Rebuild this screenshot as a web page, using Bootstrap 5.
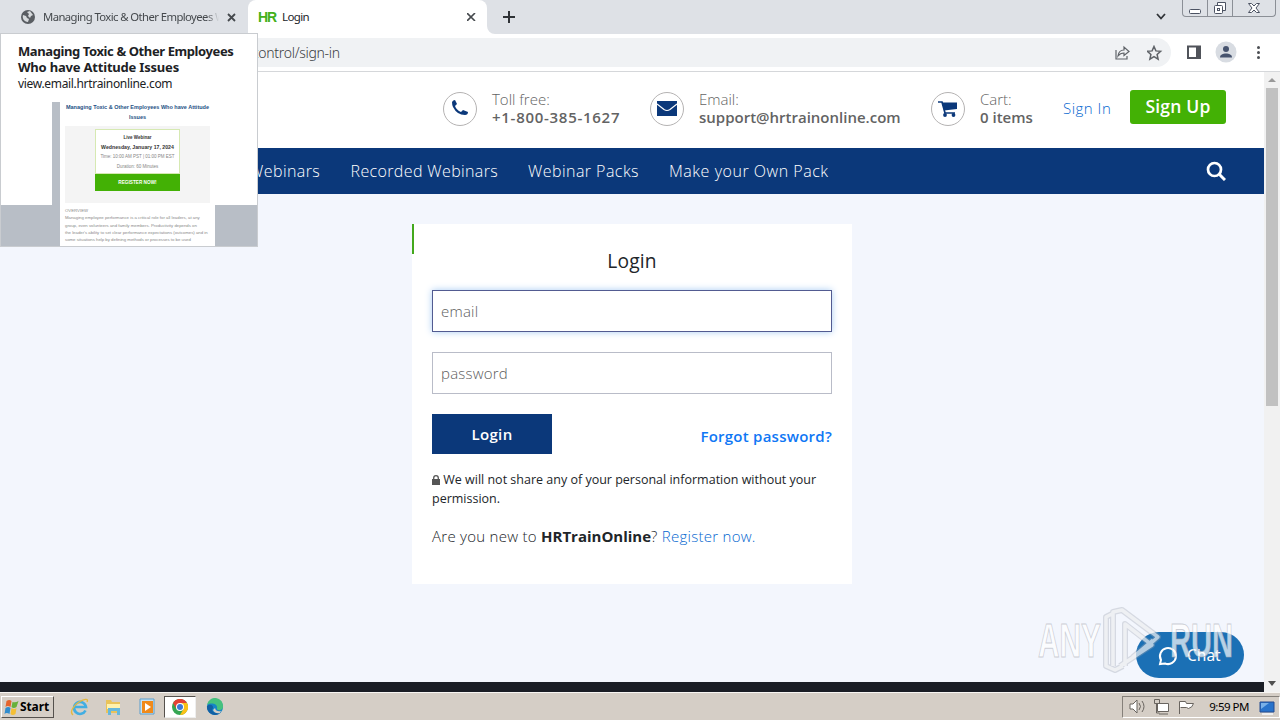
<!DOCTYPE html>
<html lang="en">
<head>
    <meta charset="UTF-8">
    <meta name="viewport" content="width=device-width, initial-scale=1.0">
    <title>Login</title>
    <link href="https://cdn.jsdelivr.net/npm/bootstrap@5.3.0/dist/css/bootstrap.min.css" rel="stylesheet">
    <style>
        body { width: 1280px; height: 720px; overflow: hidden; font-family: "Open Sans", "Noto Sans", sans-serif; font-size: 15px; color: #212529; }
        svg { display: block; flex: none; }
        .ui { font-family: "Noto Sans", sans-serif; }
        /* browser */
        .tabstrip { height: 34px; background: #dee1e6; font-size: 12px; }
        .tab-old { width: 248px; padding-left: 21px; color: #45494d; }
        .tab-old .tab-title { width: 176px; margin-left: 8px; overflow: hidden; font-size: 11.3px; letter-spacing: -.58px; -webkit-mask-image: linear-gradient(to right, #000 93%, transparent 100%); }
        .tab-now { width: 239px; background: #fff; border-radius: 8px 8px 0 0; padding: 0 8px 0 10px; }
        .tab-name { font-size: 11.5px; letter-spacing: -.6px; }
        .hr-logo { font: bold 14px "Liberation Sans", sans-serif; color: #43b01a; width: 24px; letter-spacing: -1.2px; }
        .win-btns { width: 94px; height: 17px; border: 1px solid #8b8f96; border-top: 0; border-radius: 0 0 4px 4px; margin-right: 4px; }
        .win-btns > div { border-right: 1px solid #8b8f96; width: 25px; padding-top: 1px; }
        .win-btns > div:last-child { border: 0; width: 42px; }
        .toolbar { height: 38px; padding-top: 4px; border-bottom: 1px solid #d5d7da; background: #fff; }
        .address { width: 1171px; height: 29px; background: #f0f2f4; border-radius: 0 15px 15px 0; padding-left: 252px; font-size: 14px; font-weight: 300; color: #3c4043; letter-spacing: -.3px; }
        /* page */
        .viewport { height: 620px; }
        .page { width: 1264px; background: #f3f6fd; }
        .topbar { height: 76px; padding-left: 443px; background: #fff; color: #636363; line-height: 18px; padding-bottom: 2px; font-weight: 300; }
        .topbar b { font-weight: 600; display: block; }
        .contact-text { margin-top: -2px; }
        .c-phone b { letter-spacing: .72px; }
        .ring { width: 34px; height: 34px; border: 1px solid #b5b3b3; border-radius: 50%; margin-right: 15px; flex: none; }
        .c-phone { width: 207px; }
        .c-mail { width: 281px; }
        .c-cart { width: 132px; }
        .c-sign { width: 67px; letter-spacing: .5px; margin-top: -2px; }
        .bg-link { color: #0667d0; text-decoration: none; }
        .btn-up { width: 96px; height: 34px; background: #43b105; color: #fff; border-radius: 3px; font-size: 17.5px; font-weight: 600; padding: 0; margin-top: -5px; letter-spacing: .2px; }
        .mainnav { height: 46px; background: #0b387a; padding: 0 38px 0 215px; font-size: 16px; font-weight: 300; color: #fff; }
        .mainnav span { white-space: nowrap; }
        .n1 { width: 135.5px; letter-spacing: .4px; }
        .n2 { width: 177.5px; letter-spacing: .37px; }
        .n3 { width: 141px; letter-spacing: .45px; }
        .n4 { letter-spacing: .53px; }
        .login-box { width: 440px; height: 360px; margin: 30px 0 0 412px; background: #fff; }
        .accent { width: 2px; height: 30px; background: #43a81c; }
        .login-form { width: 400px; margin-left: 18px; padding-top: 25px; }
        .login-form h1 { font-size: 19.2px; line-height: 24px; font-weight: 500; margin-bottom: 17px; letter-spacing: .2px; }
        .login-form .form-control { height: 42px; border-radius: 0; border: 1px solid #b9bcc8; padding: 0 8px 1px; font-size: 15px; font-weight: 300; margin-bottom: 20px; letter-spacing: .2px; }
        .login-form .form-control::placeholder { color: #5c5c5c; opacity: 1; }
        .login-form .is-active { border-color: #525b91; box-shadow: 0 0 7px #a9ccf3; }
        .btn-login { width: 120px; height: 40px; border-radius: 0; background: #0b387a; color: #fff; font-size: 15px; font-weight: 600; padding: 0; letter-spacing: .35px; }
        .forgot { color: #0f77f5; font-weight: 600; text-decoration: none; padding-top: 5px; letter-spacing: .25px; }
        .privacy { font-size: 12.5px; line-height: 19px; margin: 16px 0 17px; }
        .privacy svg { display: inline-block; vertical-align: -1px; }
        .signup { font-weight: 300; line-height: 22px; letter-spacing: .27px; }
        .signup b { font-weight: 700; letter-spacing: 0; }
        .scrollcol { width: 16px; background: #f1f1f1; }
        .thumb { width: 12px; height: 318px; background: #c1c1c1; margin: 5px auto 0; }
        .page-foot { height: 10px; background: #1a1d25; }
        /* hover card of the first tab */
        .hovercard { position: absolute; left: 0; top: 33px; width: 258px; height: 214px; background: #fff; border: 1px solid #c9ccd0; overflow: hidden; font-size: 13px; line-height: 16px; color: #202124; }
        .hover-head { height: 68px; padding: 9px 0 0 17px; white-space: nowrap; }
        .hover-head b { letter-spacing: -.4px; }
        .hover-head b:nth-of-type(2) { letter-spacing: -.2px; }
        .hover-head .site { font-size: 12px; letter-spacing: -.32px; }
        .preview { height: 145px; background: linear-gradient(#fff 103px, #b8bec6 103px); padding-left: 51px; font-family: "Liberation Sans", sans-serif; }
        .mail { width: 163px; height: 145px; background: #fff; border-left: 8px solid #b8bec6; padding: 0 5px; text-align: center; }
        .mail-title { font-size: 5.5px; line-height: 9.5px; font-weight: bold; color: #245084; padding-top: 1px; white-space: nowrap; }
        .mail-body { background: #f4f4f4; height: 77px; margin-top: 4px; padding: 3px 30px 0; }
        .mail-card { border: 1px solid #d6e9b2; background: #fff; height: 45px; font-size: 4.5px; line-height: 9.7px; color: #858585; padding-top: 3px; white-space: nowrap; }
        .mail-card b { color: #333; display: block; }
        .mail-card b + b { font-size: 5.2px; }
        .mail-btn { background: #43b105; color: #fff; height: 17px; line-height: 17px; font-size: 4.7px; font-weight: bold; }
        .mail-text { font-size: 4.3px; line-height: 7.3px; color: #898989; text-align: left; margin-top: 4px; white-space: nowrap; }
        /* chat and watermark lie over the page */
        .chat { position: absolute; left: 1136px; top: 632px; width: 108px; height: 46px; border-radius: 23px; background: #1b70b5; color: #fff; font-size: 15.5px; padding: 2px 0 0 21px; }
        .watermark { position: absolute; left: 1030px; top: 600px; }
        /* taskbar */
        .taskbar { height: 28px; background: #d5cec6; border-top: 1px solid #f7f5f2; padding: 3px 0 0 1px; font-size: 12px; color: #000; }
        .start { width: 53px; height: 22px; border: 1px solid; border-color: #fff #55514d #55514d #fff; font-weight: bold; letter-spacing: -.1px; padding-left: 1px; }
        .apps { margin-left: 16px; height: 22px; }
        .app-on { width: 32px; height: 22px; background: #fff; border: 1px solid; border-color: #55514d #eee #eee #55514d; }
        .tray { width: 158px; height: 22px; border: 1px solid; border-color: #85807a #fff #fff #85807a; padding-left: 6px; }
        .clock { font-size: 11.5px; letter-spacing: -.5px; }
    </style>
</head>
<body class="d-flex flex-column position-relative">
    <div class="tabstrip ui d-flex">
        <div class="tab-old d-flex align-items-center">
            <svg width="14" height="14" viewBox="0 0 14 14"><circle cx="7" cy="7" r="7" fill="#5a5e63"/><path d="M2 5l3 1 1 2 2 1-1 3C3 12 1 8 2 5zM6 2l3-1 3 4-2 1-1 2-2-2 1-2z" fill="#d7dadd"/></svg>
            <div class="tab-title text-nowrap">Managing Toxic &amp; Other Employees W</div>
            <svg width="9" height="9" viewBox="0 0 9 9" class="ms-2"><path d="M1 1l7 7M8 1L1 8" stroke="#45494d" stroke-width="1.8"/></svg>
        </div>
        <div class="tab-now d-flex align-items-center">
            <span class="hr-logo">HR</span><span class="tab-name">Login</span>
            <svg class="ms-auto" width="12" height="8" viewBox="0 0 12 8"><path d="M0 0l8 8M8 0L0 8" stroke="#45494d" stroke-width="1.6"/></svg>
        </div>
        <svg width="45" height="34" viewBox="0 0 45 34"><path d="M0 26v8h8a8 8 0 0 1-8-8z" fill="#fff"/><path d="M22 11v12M16 17h12" stroke="#2f3236" stroke-width="2"/></svg>
        <svg class="ms-auto me-3" width="11" height="34" viewBox="0 0 11 34"><path d="M2 14l4 4.500 4-4.500" fill="none" stroke="#303338" stroke-width="1.800"/></svg>
        <div class="win-btns d-flex justify-content-start">
            <div><svg width="24" height="14"><rect x="6.500" y="8.500" width="11" height="4" rx="1" fill="#fff" stroke="#4c5363"/></svg></div>
            <div><svg width="24" height="15"><path d="M9.500 4.500v-3h8v8h-3" fill="#fff" stroke="#4c5363"/><rect x="6.500" y="4.500" width="8" height="8" rx="1" fill="#fff" stroke="#4c5363"/><rect x="9.500" y="7.500" width="2" height="2" fill="none" stroke="#4c5363"/></svg></div>
            <div><svg width="42" height="15"><path d="M15.500 2.500h3l2.500 2.500 2.500-2.500h3l-3.500 4.500 3.500 4.500h-3l-2.500-2.500-2.500 2.500h-3l3.500-4.500z" fill="#fff" stroke="#4c5363"/></svg></div>
        </div>
    </div>
    <div class="toolbar ui d-flex">
        <div class="address d-flex align-items-center">
            <span>control/sign-in</span>
            <svg class="ms-auto" width="17" height="16" viewBox="0 0 17 16" fill="none" stroke="#5f6368" stroke-width="1.200"><path d="M2 5v9h11v-3M4 11c.5-4 3-6 6-6V2l5 4.500-5 4V8c-3 0-4.500 1-6 3z"/></svg>
            <svg class="ms-3 me-2" width="16" height="16" viewBox="0 0 16 16" fill="none" stroke="#5f6368" stroke-width="1.500"><path d="M7 1.500l1.900 4.400 4.700.4-3.500 3.200 1 4.700L7 11.700l-4.100 2.500 1-4.700L.4 6.300l4.700-.4z"/></svg>
        </div>
        <svg width="109" height="29" viewBox="0 0 109 29">
            <path d="M16 7.500h14v13.500H16zM18 9.500v9.500h7V9.500z" fill="#50535a" fill-rule="evenodd"/>
            <circle cx="55" cy="14" r="10.500" fill="#d8dce2"/><circle cx="55" cy="11" r="3" fill="#46536e"/><path d="M49 19.500c0-3 3-4 6-4s6 1 6 4z" fill="#46536e"/>
            <g fill="#4b4e53"><circle cx="87.500" cy="9.500" r="1.500"/><circle cx="87.500" cy="14.500" r="1.500"/><circle cx="87.500" cy="19.500" r="1.500"/></g>
        </svg>
    </div>
    <div class="viewport d-flex">
        <div class="page d-flex flex-column">
            <header class="topbar d-flex align-items-center">
                <div class="c-phone d-flex align-items-center">
                    <div class="ring d-flex align-items-center justify-content-center"><svg width="18" height="20" viewBox="0 0 18 20"><path d="M1 3q1-2 3-2l2 4-2 2q1.500 4 6 6l2-2 5 2q0 3-3 3Q6 16 2 8 1 6 1 3z" fill="#0b387a"/></svg></div>
                    <div class="contact-text">Toll free:<b>+1-800-385-1627</b></div>
                </div>
                <div class="c-mail d-flex align-items-center">
                    <div class="ring d-flex align-items-center justify-content-center"><svg width="20" height="16" viewBox="0 0 20 16"><path d="M0 0h20v15H0z" fill="#0b387a"/><path d="M0 3l7 5.500q3 2 6 0L20 3" fill="none" stroke="#fff" stroke-width="1.200"/></svg></div>
                    <div class="contact-text">Email:<b>support@hrtrainonline.com</b></div>
                </div>
                <div class="c-cart d-flex align-items-center">
                    <div class="ring d-flex align-items-center justify-content-center"><svg width="20" height="17" viewBox="0 0 20 17"><path d="M0 1h4l3 11h10" fill="none" stroke="#0b387a" stroke-width="1.700"/><path d="M4 1.500h15V8L6 9.500z" fill="#0b387a"/><circle cx="7" cy="14" r="1.900" fill="#0b387a"/><circle cx="15.500" cy="14" r="1.900" fill="#0b387a"/></svg></div>
                    <div class="contact-text">Cart:<b>0 items</b></div>
                </div>
                <a class="c-sign bg-link" href="#">Sign In</a>
                <button class="btn btn-up">Sign Up</button>
            </header>
            <nav class="mainnav d-flex align-items-center">
                <span class="n1">Live Webinars</span>
                <span class="n2">Recorded Webinars</span>
                <span class="n3">Webinar Packs</span>
                <span class="n4">Make your Own Pack</span>
                <svg class="ms-auto" width="20" height="20" viewBox="0 0 20 20" fill="none" stroke="#fff"><circle cx="8.500" cy="8.500" r="6.500" stroke-width="2.700"/><path d="M13 13l6 6" stroke-width="3"/></svg>
            </nav>
            <main class="login-box d-flex">
                <div class="accent"></div>
                <form class="login-form">
                    <h1 class="text-center">Login</h1>
                    <input type="email" class="form-control is-active" placeholder="email">
                    <input type="password" class="form-control" placeholder="password">
                    <div class="d-flex justify-content-between align-items-center">
                        <button type="button" class="btn btn-login">Login</button>
                        <a class="forgot" href="#">Forgot password?</a>
                    </div>
                    <p class="privacy"><svg width="8" height="10" viewBox="0 0 8 10"><path d="M0 4h8v6H0z" fill="#555"/><path d="M1.700 5V3a2.300 2.300 0 0 1 4.600 0v2" fill="none" stroke="#555" stroke-width="1.300"/></svg> <span>We will not share any of your personal information without your</span><br>permission.</p>
                    <div class="signup"><span>Are you new to </span><b>HRTrainOnline</b>? <a class="bg-link" href="#">Register now.</a></div>
                </form>
            </main>
            <div class="page-foot mt-auto"></div>
        </div>
        <div class="scrollcol d-flex flex-column">
            <svg width="16" height="11" viewBox="0 0 16 11"><path d="M4 10l4-4 4 4z" fill="#999"/></svg>
            <div class="thumb"></div>
            <svg class="mt-auto" width="16" height="16" viewBox="0 0 16 16"><path d="M4 5h8l-4 5z" fill="#505050"/></svg>
        </div>
    </div>
    <footer class="taskbar ui d-flex">
        <div class="start d-flex align-items-center">
            <svg width="17" height="17" viewBox="0 0 16 17"><path d="M3 2q3-2 5 0L7 8q-3-2-5 0z" fill="#e5642d"/><path d="M9 3q3 1 6-1l-2 6q-3 2-5 0z" fill="#68b13b"/><path d="M2 9q3-2 5 0l-1 6q-3-2-5 0z" fill="#318ccd"/><path d="M8 9q3 2 5 0l-1 6q-3 2-5 0z" fill="#f4bf35"/></svg><span>Start</span>
        </div>
        <div class="apps d-flex align-items-center">
            <svg width="19" height="20" viewBox="0 0 19 20"><path d="M15.500 13.500A6 6 0 1 1 16 10H5" fill="none" stroke="#42aee2" stroke-width="2.600"/><path d="M3 18C-1 15 4 8 9 5s10-4 8 0" fill="none" stroke="#e5b93f" stroke-width="1.400"/></svg>
            <svg class="ms-3" width="17" height="18" viewBox="0 0 17 18"><path d="M1 2h5l1 2h8v11H1z" fill="#e9c35a"/><path d="M2 6h13v5H2z" fill="#fff2ad"/><path d="M3 10h12v7h-3v-4H6v4H3z" fill="#66b8dc"/></svg>
            <svg class="ms-3" width="18" height="18" viewBox="0 0 18 18"><path d="M2 1h14v15H2z" fill="#c7e2f3" stroke="#5b9fce"/><path d="M4 3h11v12H4z" fill="#f08a1b"/><path d="M7 5l6 4-6 4z" fill="#fff"/></svg>
            <div class="app-on ms-2 d-flex align-items-center justify-content-center"><svg width="16" height="16" viewBox="0 0 16 16"><circle cx="8" cy="8" r="8" fill="#35a653"/><path d="M1 4a8 8 0 0 1 14 0H8L4.500 10z" fill="#e44235"/><path d="M15 4a8 8 0 0 1-7 12l3.500-6L8 4z" fill="#fbc116"/><circle cx="8" cy="8" r="4" fill="#fff"/><circle cx="8" cy="8" r="3" fill="#3c79d8"/></svg></div>
            <svg class="ms-2" width="20" height="18" viewBox="0 0 20 18"><circle cx="11" cy="9" r="8" fill="#1685c6"/><path d="M3 7a8 8 0 0 1 16 2c0 4-7 4-6 1 1-4-6-6-10-3z" fill="#46c17e"/><path d="M3 8c4-3 8 0 5 4 1 3 5 4 9 2-5 6-15 2-14-6z" fill="#1260a4"/><path d="M11 10q1 4 6 3l-1 2q-5 1-7-3z" fill="#d5cec6"/></svg>
        </div>
        <div class="tray d-flex align-items-center ms-auto">
            <svg width="69" height="20" viewBox="0 0 69 20" fill="#fff" stroke="#69645f"><path d="M1 7h3l4-4v13l-4-4H1z"/><path d="M10 6q3 3.500 0 7M13 4q4 5.500 0 11" fill="none"/><path d="M28.500 6.500h11v8h-11zM30 17h9"/><path d="M25.500 2.500h5v4h-5zM27.500 6v10h3" fill="none"/><path d="M50.500 17V4.500h6l1 2h7q-1 4-5 5l-2-1h-6"/></svg>
            <span class="clock ms-auto">9:59 PM</span>
            <svg class="ms-2 me-0" width="22" height="18" viewBox="0 0 22 18"><path d="M3 4h14v10H3z" fill="#2873cb" stroke="#244c91"/><path d="M4 5h8l-8 6z" fill="#78b0e8"/><path d="M5 16h11" stroke="#eee" stroke-width="2"/></svg>
        </div>
    </footer>

    <div class="hovercard ui">
        <div class="hover-head"><b>Managing Toxic &amp; Other Employees</b><br><b>Who have Attitude Issues</b><br><span class="site">view.email.hrtrainonline.com</span></div>
        <div class="preview">
            <div class="mail">
                <div class="mail-title">Managing Toxic &amp; Other Employees Who have Attitude<br>Issues</div>
                <div class="mail-body">
                    <div class="mail-card"><b>Live Webinar</b><b>Wednesday, January 17, 2024</b>Time: 10:00 AM PST | 01:00 PM EST<br>Duration: 60 Minutes</div>
                    <div class="mail-btn">REGISTER NOW!</div>
                </div>
                <div class="mail-text">OVERVIEW<br>Managing employee performance is a critical role for all leaders, at any<br>group, even volunteers and family members. Productivity depends on<br>the leader's ability to set clear performance expectations (outcomes) and in<br>some situations help by defining methods or processes to be used</div>
            </div>
        </div>
    </div>
    <div class="chat ui d-flex align-items-center">
        <svg width="22" height="22" viewBox="0 0 22 22"><path d="M4 15a8 8 0 1 1 4 3.500L3 19z" fill="none" stroke="#fff" stroke-width="2"/></svg><span class="ms-2">Chat</span>
    </div>
    <svg class="watermark" width="215" height="80" viewBox="0 0 215 80">
        <g fill="none" stroke="#9fa4af" stroke-opacity=".35" stroke-width="6" stroke-linejoin="round"><path d="M82 14l-6 3v49l9 4 8-4M83 66V12l9-2 36 27-9 8M95 66V24l27 21-32 21M103 57l20-17"/></g>
        <g fill="none" stroke="#fff" stroke-opacity=".6" stroke-width="3.500" stroke-linejoin="round"><path d="M82 14l-6 3v49l9 4 8-4M83 66V12l9-2 36 27-9 8M95 66V24l27 21-32 21M103 57l20-17"/></g>
        <g font-family="Liberation Sans" font-size="48" font-weight="bold" fill="#fff" fill-opacity=".7" stroke="#a5a8b2" stroke-opacity=".55"><text x="8" y="57" textLength="63" lengthAdjust="spacingAndGlyphs">ANY</text><text x="140" y="57" textLength="63" lengthAdjust="spacingAndGlyphs">RUN</text></g>
    </svg>
    <script src="https://cdn.jsdelivr.net/npm/bootstrap@5.3.0/dist/js/bootstrap.bundle.min.js"></script>
</body>
</html>
